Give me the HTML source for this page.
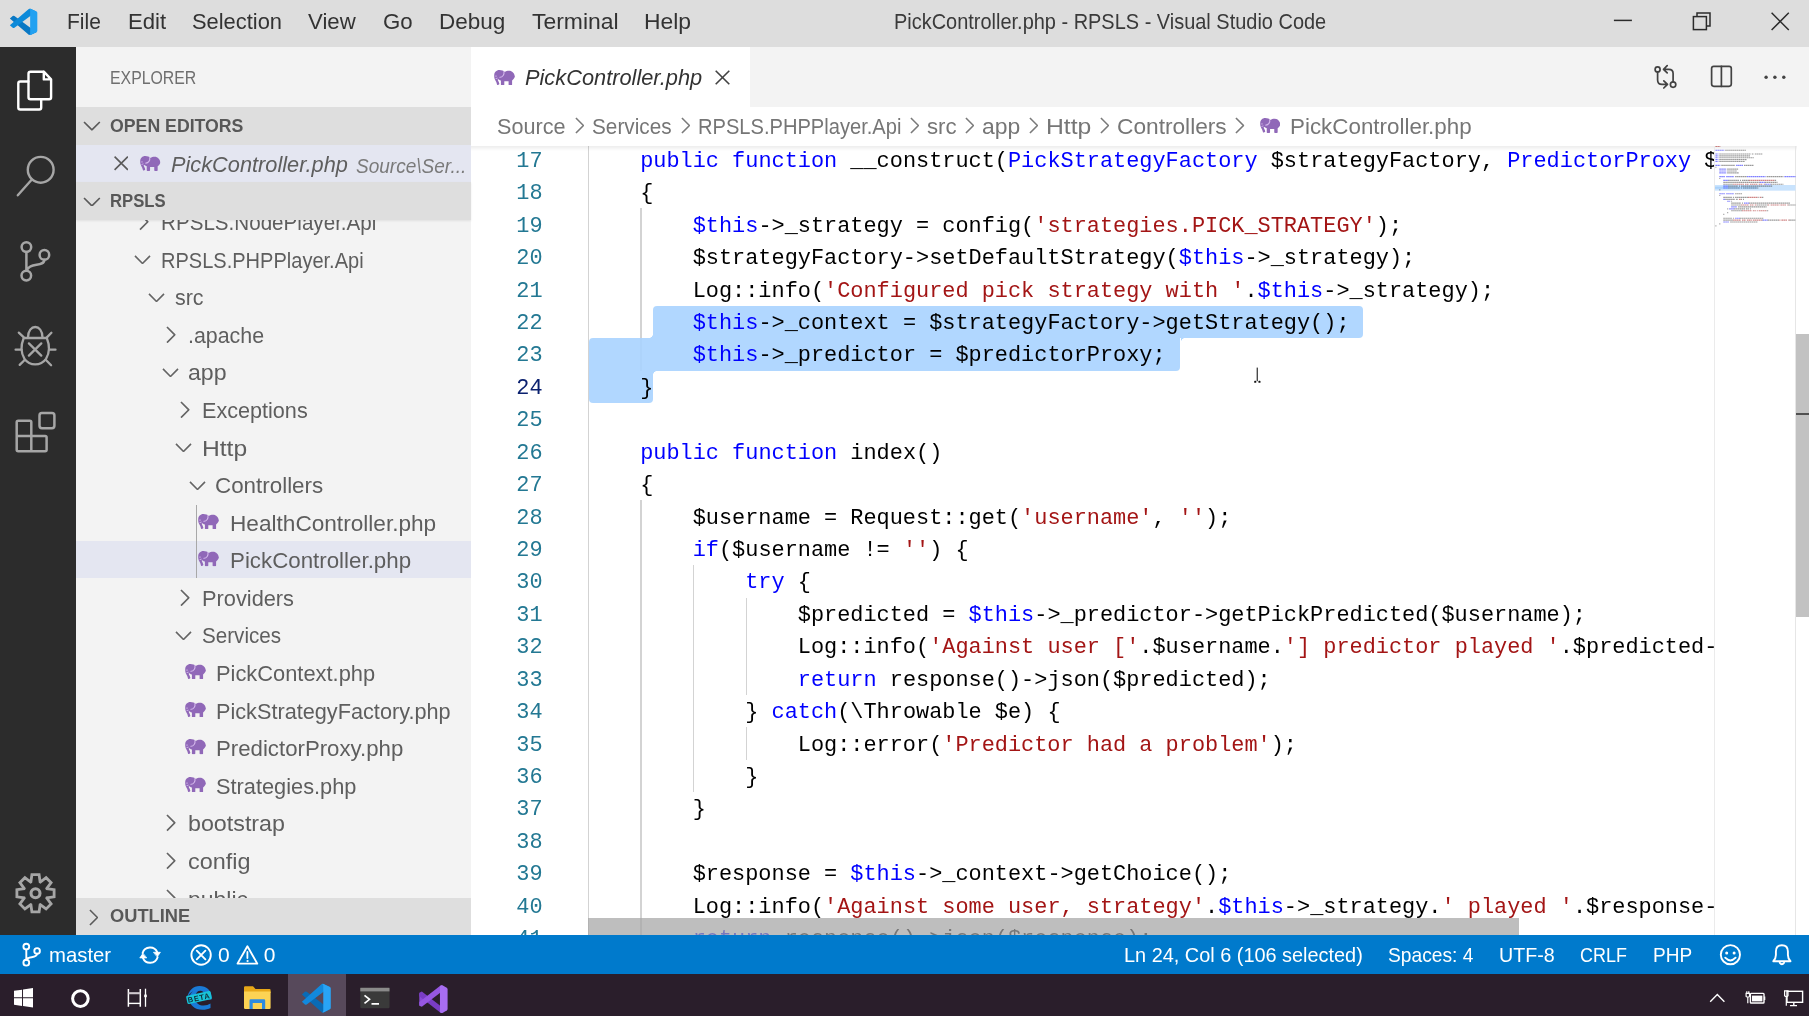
<!DOCTYPE html>
<html><head><meta charset="utf-8"><title>PickController.php - RPSLS - Visual Studio Code</title>
<style>
*{box-sizing:border-box;margin:0;padding:0}
html,body{width:1809px;height:1016px;overflow:hidden;background:#fff}
#root{position:absolute;left:0;top:0;width:1809px;height:1016px;overflow:hidden;will-change:transform}
body{position:relative;font-family:"Liberation Sans",sans-serif;}
.a{position:absolute}
.t{position:absolute;white-space:pre;line-height:1}
.m{font-family:"Liberation Mono",monospace}
.k{color:#0000ff}.s{color:#a31515}
</style></head>
<body>
<div id="root">
<svg width="0" height="0" style="position:absolute"><defs>
<symbol id="el" viewBox="0 0 21 15.4">
<path fill="#9068b8" d="M5.4 0.1C2.3 0.1 0.3 2.4 0.2 5.2 0.1 7.3 0.5 8.8 1.3 10.2 2 11.4 2.6 12.6 3 14.4 3.1 14.9 3.6 15.1 4 14.9L4.9 14.4C5.3 14.2 5.4 13.8 5.3 13.4 4.9 12 4.3 10.9 3.6 9.8L4.6 9.2C5.3 9.9 6.1 10.4 6.9 10.6L6.9 14.6C6.9 15 7.2 15.3 7.6 15.3L9.6 15.3C10 15.3 10.3 15 10.3 14.6L10.3 11.3 14.6 11.3 14.6 14.6C14.6 15 14.9 15.3 15.3 15.3L17.4 15.3C17.8 15.3 18.1 15 18.1 14.6L18.1 10.4C19.6 9.4 20.6 8 20.9 6.6 20.5 3.2 18.2 0.7 15 0.7 13.3 0.7 11.8 1.1 10.7 2 9.5 0.8 7.6 0.1 5.4 0.1Z"/>
<path fill="none" stroke="#d4b8ec" stroke-width="1.1" stroke-linecap="round" d="M9.9 1.6C10.6 4.4 8.6 7.4 5.9 7.3"/>
<path fill="none" stroke="#d4b8ec" stroke-width="0.9" stroke-linecap="round" d="M1.9 8.6L3.2 8.2M1.6 6.1L2.4 6.1"/>
</symbol>
<symbol id="cd" viewBox="0 0 18 10"><path fill="none" stroke-width="1.7" d="M1 1L9 9L17 1"/></symbol>
<symbol id="cr" viewBox="0 0 10 18"><path fill="none" stroke-width="1.7" d="M1 1L9 9L1 17"/></symbol>
</defs></svg>
<div class="a" style="left:0px;top:0px;width:1809px;height:47px;background:#dddddd;"></div>
<svg class="a" style="left:9.1px;top:7.8px" width="28.6" height="27.8" viewBox="0 0 100 100" preserveAspectRatio="none">
<path fill="#0a78c4" d="M3 62L13 71Q16 73 19 71L96 13 75 3Q71 1.5 68 4.5L3 62Z" transform="translate(0,100) scale(1,-1)"/>
<path fill="#0d8ad9" d="M3 62L13 71Q16 73 19 71L96 13 75 3Q71 1.5 68 4.5L3 62Z"/>
<path fill="#22a1f1" d="M75 3L96 13Q99 14.500 99 18L99 82Q99 85.500 96 87L75 97Q72 98 70 96Q74 96 74 92L74 8Q74 4 70 4Q72 2 75 3Z"/>
</svg>
<div class="t" style="left:67.44px;top:9.37px;font-size:21.3px;line-height:27.69px;color:#333333;transform:scaleX(0.9851);transform-origin:0 50%;">File</div>
<div class="t" style="left:128.07px;top:9.37px;font-size:21.3px;line-height:27.69px;color:#333333;transform:scaleX(1.0396);transform-origin:0 50%;">Edit</div>
<div class="t" style="left:192.39px;top:9.37px;font-size:21.3px;line-height:27.69px;color:#333333;transform:scaleX(1.0274);transform-origin:0 50%;">Selection</div>
<div class="t" style="left:308.47px;top:9.37px;font-size:21.3px;line-height:27.69px;color:#333333;transform:scaleX(1.0411);transform-origin:0 50%;">View</div>
<div class="t" style="left:382.67px;top:9.37px;font-size:21.3px;line-height:27.69px;color:#333333;transform:scaleX(1.0438);transform-origin:0 50%;">Go</div>
<div class="t" style="left:438.95px;top:9.37px;font-size:21.3px;line-height:27.69px;color:#333333;transform:scaleX(1.0563);transform-origin:0 50%;">Debug</div>
<div class="t" style="left:531.52px;top:9.37px;font-size:21.3px;line-height:27.69px;color:#333333;transform:scaleX(1.0766);transform-origin:0 50%;">Terminal</div>
<div class="t" style="left:643.93px;top:9.37px;font-size:21.3px;line-height:27.69px;color:#333333;transform:scaleX(1.0738);transform-origin:0 50%;">Help</div>
<div class="t" style="left:894.4px;top:9.37px;font-size:21.3px;line-height:27.69px;color:#3a3a3a;transform:scaleX(0.9369);transform-origin:0 50%;">PickController.php - RPSLS - Visual Studio Code</div>
<svg class="a" style="left:1605px;top:5px" width="200" height="36" viewBox="1605 5 200 36" fill="none" stroke="#2b2b2b" stroke-width="1.5"><path d="M1613.9 20.4H1631.9"/><rect x="1693.4" y="16.6" width="13" height="13"/><path d="M1697 16.4V13H1710V26H1706.6"/><path d="M1771.6 12.8L1788.8 30M1788.8 12.8L1771.6 30"/></svg>
<div class="a" style="left:0px;top:47px;width:75.5px;height:889px;background:#2c2c2c;"></div>
<svg class="a" style="left:0;top:46px" width="76" height="890" viewBox="0 46 76 890" fill="none" stroke-linejoin="round" stroke-linecap="round"><g stroke="#ffffff" stroke-width="2.4"><path d="M28.3 81.500H20.300Q18.300 81.500 18.300 83.500V107.500Q18.300 109.500 20.300 109.500H39.200Q41.200 109.500 41.200 107.500V99.500"/><path d="M43.800 71.700H30.500Q28.500 71.700 28.500 73.700V97.200Q28.500 99.200 30.500 99.200H49.100Q51.100 99.200 51.100 97.200V79.400L43.800 71.700V79.400H51.100"/></g><g stroke="#a6a6a6" stroke-width="2.4"><circle cx="40.7" cy="169.8" r="12.9"/><path d="M31.6 179.800L17.800 195.300"/></g><g stroke="#a6a6a6" stroke-width="2.5"><circle cx="26.4" cy="247.1" r="4.8"/><circle cx="26.3" cy="275.6" r="4.8"/><circle cx="44.4" cy="254.9" r="4.8"/><path d="M26.400 252V270.800M44.400 259.800C44.400 267.500 29 262 26.800 270.500"/></g><g stroke="#a6a6a6" stroke-width="2.3"><path d="M23.700 338H46.800C49.800 345.500 49.600 353 46 358.800C43.200 362.800 39.200 364.400 35.200 364.400C31.200 364.400 27.300 362.800 24.500 358.800C20.900 353 20.700 345.500 23.700 338Z"/><path d="M28 337.500C28 323.500 42.500 323.500 42.500 337.500"/><path d="M28.900 343.400L41.300 355.600M41.300 343.400L28.900 355.600"/><path d="M15.600 349.700H21.600M49.500 349.700H55.500M18.800 332.600L23.600 337.200M51.400 332.800L46.900 337.400M19.700 364.900L24.900 359.800M51.100 365.200L45.700 359.800"/></g><g stroke="#a6a6a6" stroke-width="2.5"><path d="M18.200 420.800H29.800Q31.300 420.800 31.300 422.300V436.100H45.100Q46.600 436.100 46.600 437.600V449.800Q46.600 451.300 45.100 451.300H18.200Q16.700 451.300 16.700 449.800V422.300Q16.700 420.800 18.200 420.800ZM16.700 436.100H31.300V451.300"/><rect x="39.5" y="413.100" width="14.900" height="15.100" rx="2.400"/></g></svg>
<svg class="a" style="left:0;top:860px" width="75" height="70" viewBox="0 860 75 70" fill="none" stroke="#a6a6a6" stroke-width="2.8" stroke-linejoin="miter"><path d="M30.9 881.9L31.9 874.7L39.1 874.7L40.1 881.9L40.3 882.0L46.1 877.7L51.1 882.7L46.8 888.5L46.9 888.7L54.1 889.7L54.1 896.9L46.9 897.9L46.8 898.1L51.1 903.9L46.1 908.9L40.3 904.6L40.1 904.7L39.1 911.9L31.9 911.9L30.9 904.7L30.7 904.6L24.9 908.9L19.9 903.9L24.2 898.1L24.1 897.9L16.9 896.9L16.9 889.7L24.1 888.7L24.2 888.5L19.9 882.7L24.9 877.7L30.7 882.0Z"/><circle cx="35.5" cy="893.3" r="4.5" stroke-width="3.1"/></svg>
<div class="a" style="left:75.5px;top:47px;width:395.1px;height:889px;background:#f3f3f3;"></div>
<div class="t" style="left:110.25px;top:65.96px;font-size:18.5px;line-height:24.05px;color:#6f6f6f;transform:scaleX(0.8565);transform-origin:0 50%;">EXPLORER</div>
<div class="a" style="left:76px;top:540.7px;width:394.6px;height:37.7px;background:#e4e6f1;"></div>
<div class="a" style="left:195.8px;top:504.5px;width:1.2px;height:73.9px;background:#a8a8a8;"></div>
<div class="t" style="left:161.36px;top:209.1px;font-size:22px;line-height:28.6px;color:#5e5e5e;transform:scaleX(0.9368);transform-origin:0 50%;">RPSLS.NodePlayer.Api</div>
<svg class="a" style="left:139.31px;top:212.83px;stroke:#646464;" width="9.78" height="17.68"><use href="#cr"/></svg>
<div class="t" style="left:161.4px;top:246.68px;font-size:22px;line-height:28.6px;color:#5e5e5e;transform:scaleX(0.9104);transform-origin:0 50%;">RPSLS.PHPPlayer.Api</div>
<svg class="a" style="left:134.4px;top:255.05px;stroke:#646464;" width="17.0" height="9.4"><use href="#cd"/></svg>
<div class="t" style="left:174.91px;top:284.26px;font-size:22px;line-height:28.6px;color:#5e5e5e;transform:scaleX(0.9742);transform-origin:0 50%;">src</div>
<svg class="a" style="left:147.95px;top:292.63px;stroke:#646464;" width="17.0" height="9.4"><use href="#cd"/></svg>
<div class="t" style="left:188.42px;top:321.84px;font-size:22px;line-height:28.6px;color:#5e5e5e;transform:scaleX(0.9715);transform-origin:0 50%;">.apache</div>
<svg class="a" style="left:166.41px;top:325.57px;stroke:#646464;" width="9.78" height="17.68"><use href="#cr"/></svg>
<div class="t" style="left:188.31px;top:359.42px;font-size:22px;line-height:28.6px;color:#5e5e5e;transform:scaleX(1.0505);transform-origin:0 50%;">app</div>
<svg class="a" style="left:161.5px;top:367.79px;stroke:#646464;" width="17.0" height="9.4"><use href="#cd"/></svg>
<div class="t" style="left:201.9px;top:397.0px;font-size:22px;line-height:28.6px;color:#5e5e5e;transform:scaleX(0.9820);transform-origin:0 50%;">Exceptions</div>
<svg class="a" style="left:179.96px;top:400.73px;stroke:#646464;" width="9.78" height="17.68"><use href="#cr"/></svg>
<div class="t" style="left:201.72px;top:434.58px;font-size:22px;line-height:28.6px;color:#5e5e5e;transform:scaleX(1.1188);transform-origin:0 50%;">Http</div>
<svg class="a" style="left:175.05px;top:442.95px;stroke:#646464;" width="17.0" height="9.4"><use href="#cd"/></svg>
<div class="t" style="left:215.46px;top:472.16px;font-size:22px;line-height:28.6px;color:#5e5e5e;transform:scaleX(1.0170);transform-origin:0 50%;">Controllers</div>
<svg class="a" style="left:188.6px;top:480.53px;stroke:#646464;" width="17.0" height="9.4"><use href="#cd"/></svg>
<svg class="a" style="left:198.4px;top:513.71px;" width="21" height="15.4"><use href="#el"/></svg>
<div class="t" style="left:229.54px;top:509.74px;font-size:22px;line-height:28.6px;color:#5e5e5e;transform:scaleX(1.0281);transform-origin:0 50%;">HealthController.php</div>
<svg class="a" style="left:198.4px;top:551.29px;" width="21" height="15.4"><use href="#el"/></svg>
<div class="t" style="left:229.56px;top:547.32px;font-size:22px;line-height:28.6px;color:#5e5e5e;transform:scaleX(1.0142);transform-origin:0 50%;">PickController.php</div>
<div class="t" style="left:201.89px;top:584.9px;font-size:22px;line-height:28.6px;color:#5e5e5e;transform:scaleX(0.9902);transform-origin:0 50%;">Providers</div>
<svg class="a" style="left:179.96px;top:588.63px;stroke:#646464;" width="9.78" height="17.68"><use href="#cr"/></svg>
<div class="t" style="left:201.96px;top:622.48px;font-size:22px;line-height:28.6px;color:#5e5e5e;transform:scaleX(0.9374);transform-origin:0 50%;">Services</div>
<svg class="a" style="left:175.05px;top:630.85px;stroke:#646464;" width="17.0" height="9.4"><use href="#cd"/></svg>
<svg class="a" style="left:184.9px;top:664.03px;" width="21" height="15.4"><use href="#el"/></svg>
<div class="t" style="left:216.09px;top:660.06px;font-size:22px;line-height:28.6px;color:#5e5e5e;transform:scaleX(0.9933);transform-origin:0 50%;">PickContext.php</div>
<svg class="a" style="left:184.9px;top:701.61px;" width="21" height="15.4"><use href="#el"/></svg>
<div class="t" style="left:216.1px;top:697.64px;font-size:22px;line-height:28.6px;color:#5e5e5e;transform:scaleX(0.9856);transform-origin:0 50%;">PickStrategyFactory.php</div>
<svg class="a" style="left:184.9px;top:739.19px;" width="21" height="15.4"><use href="#el"/></svg>
<div class="t" style="left:216.07px;top:735.22px;font-size:22px;line-height:28.6px;color:#5e5e5e;transform:scaleX(1.0098);transform-origin:0 50%;">PredictorProxy.php</div>
<svg class="a" style="left:184.9px;top:776.77px;" width="21" height="15.4"><use href="#el"/></svg>
<div class="t" style="left:216.09px;top:772.8px;font-size:22px;line-height:28.6px;color:#5e5e5e;transform:scaleX(0.9897);transform-origin:0 50%;">Strategies.php</div>
<div class="t" style="left:188.3px;top:810.38px;font-size:22px;line-height:28.6px;color:#5e5e5e;transform:scaleX(1.0573);transform-origin:0 50%;">bootstrap</div>
<svg class="a" style="left:166.41px;top:814.11px;stroke:#646464;" width="9.78" height="17.68"><use href="#cr"/></svg>
<div class="t" style="left:188.29px;top:847.96px;font-size:22px;line-height:28.6px;color:#5e5e5e;transform:scaleX(1.0646);transform-origin:0 50%;">config</div>
<svg class="a" style="left:166.41px;top:851.69px;stroke:#646464;" width="9.78" height="17.68"><use href="#cr"/></svg>
<div class="t" style="left:188.32px;top:885.54px;font-size:22px;line-height:28.6px;color:#5e5e5e;transform:scaleX(1.0448);transform-origin:0 50%;">public</div>
<svg class="a" style="left:166.41px;top:889.27px;stroke:#646464;" width="9.78" height="17.68"><use href="#cr"/></svg>
<div class="a" style="left:76px;top:107px;width:394.6px;height:37.8px;background:#dedede;z-index:3"></div>
<div class="a" style="left:76px;top:144.8px;width:394.6px;height:37.0px;background:#e4e6f1;z-index:3"></div>
<div class="a" style="left:76px;top:181.8px;width:394.6px;height:38.1px;background:#dedede;z-index:3;box-shadow:0 1px 2px rgba(0,0,0,0.08)"></div>
<div class="a" style="left:76px;top:898.1px;width:394.6px;height:37.9px;background:#dedede;z-index:3"></div>
<div class="t" style="left:110.14px;top:114.17px;font-size:19px;line-height:24.7px;color:#585858;transform:scaleX(0.9315);transform-origin:0 50%;z-index:4;font-weight:bold;">OPEN EDITORS</div>
<svg class="a" style="left:83.17px;top:121.47px;stroke:#5a5a5a;z-index:4;" width="17.85" height="9.87"><use href="#cd"/></svg>
<div class="t" style="left:110.2px;top:189.27px;font-size:19px;line-height:24.7px;color:#585858;transform:scaleX(0.8775);transform-origin:0 50%;z-index:4;font-weight:bold;">RPSLS</div>
<svg class="a" style="left:83.17px;top:196.56px;stroke:#5a5a5a;z-index:4;" width="17.85" height="9.87"><use href="#cd"/></svg>
<div class="t" style="left:110.1px;top:904.47px;font-size:19px;line-height:24.7px;color:#585858;transform:scaleX(0.9616);transform-origin:0 50%;z-index:4;font-weight:bold;">OUTLINE</div>
<svg class="a" style="left:88.5px;top:908.5px;stroke:#5a5a5a;z-index:4;" width="9.4" height="17.0"><use href="#cr"/></svg>
<svg class="a" style="left:113.5px;top:156.3px;z-index:4" width="14.5" height="14.5" viewBox="0 0 14.5 14.5"><path d="M0.6 0.6L13.9 13.9M13.9 0.6L0.6 13.9" stroke="#5a5a5a" stroke-width="1.6" fill="none"/></svg>
<svg class="a" style="left:140.2px;top:156.08px;z-index:4;" width="20.5" height="15.03"><use href="#el"/></svg>
<div class="t" style="left:170.99px;top:150.88px;font-size:22px;line-height:28.6px;color:#5e5e5e;transform:scaleX(0.9887);transform-origin:0 50%;z-index:4;font-style:italic;">PickController.php</div>
<div class="t" style="left:356.36px;top:152.87px;font-size:20px;line-height:26.0px;color:#7a7a7a;transform:scaleX(0.9508);transform-origin:0 50%;z-index:4;font-style:italic;">Source\Ser...</div>
<div class="a" style="left:470.6px;top:47px;width:1338.4px;height:59.7px;background:#f3f3f3;"></div>
<div class="a" style="left:470.6px;top:47px;width:279.7px;height:59.7px;background:#ffffff;"></div>
<svg class="a" style="left:493.6px;top:69.6px;" width="21" height="15.4"><use href="#el"/></svg>
<div class="t" style="left:524.89px;top:64.28px;font-size:22px;line-height:28.6px;color:#333333;transform:scaleX(0.9904);transform-origin:0 50%;font-style:italic;">PickController.php</div>
<svg class="a" style="left:715px;top:69.9px" width="15" height="15" viewBox="0 0 15 15"><path d="M0.7 0.7L14.3 14.3M14.300 0.700L0.700 14.300" stroke="#424242" stroke-width="1.6" fill="none"/></svg>
<svg class="a" style="left:1650px;top:60px" width="150" height="34" viewBox="1650 60 150 34" fill="none" stroke="#424242" stroke-width="1.7" stroke-linejoin="round" stroke-linecap="round"><circle cx="1657.6" cy="69.4" r="2.5"/><circle cx="1673.1" cy="84.6" r="2.7"/><path d="M1657.600 72V80Q1657.600 84.400 1662 84.400H1667M1663.800 80.800L1667.500 84.400L1663.800 88"/><path d="M1673.100 81.800V73.500Q1673.100 69.300 1668.800 69.300H1664M1667.200 65.700L1663.500 69.300L1667.200 72.900"/><rect x="1711.6" y="66.300" width="19.7" height="20" rx="2.2"/><path d="M1721.400 66.300V86.300"/><g fill="#424242" stroke="none"><circle cx="1766.1" cy="77.2" r="1.7"/><circle cx="1774.9" cy="77.2" r="1.700"/><circle cx="1783.8" cy="77.2" r="1.700"/></g></svg>
<div class="a" style="left:470px;top:106.7px;width:1339px;height:39.3px;background:#ffffff;"></div>
<div class="t" style="left:497.3px;top:113.88px;font-size:21.5px;line-height:27.95px;color:#767676;transform:scaleX(1.0054);transform-origin:0 50%;">Source</div>
<div class="t" style="left:591.85px;top:113.88px;font-size:21.5px;line-height:27.95px;color:#767676;transform:scaleX(0.9653);transform-origin:0 50%;">Services</div>
<div class="t" style="left:697.69px;top:113.88px;font-size:21.5px;line-height:27.95px;color:#767676;transform:scaleX(0.9352);transform-origin:0 50%;">RPSLS.PHPPlayer.Api</div>
<div class="t" style="left:927.17px;top:113.88px;font-size:21.5px;line-height:27.95px;color:#767676;transform:scaleX(1.0348);transform-origin:0 50%;">src</div>
<div class="t" style="left:982.12px;top:113.88px;font-size:21.5px;line-height:27.95px;color:#767676;transform:scaleX(1.0662);transform-origin:0 50%;">app</div>
<div class="t" style="left:1046.02px;top:113.88px;font-size:21.5px;line-height:27.95px;color:#767676;transform:scaleX(1.1500);transform-origin:0 50%;">Http</div>
<div class="t" style="left:1117.14px;top:113.88px;font-size:21.5px;line-height:27.95px;color:#767676;transform:scaleX(1.0555);transform-origin:0 50%;">Controllers</div>
<svg class="a" style="left:575.0px;top:117.3px;stroke:#7a7a7a;" width="9.4" height="17.0"><use href="#cr"/></svg>
<svg class="a" style="left:680.6px;top:117.3px;stroke:#7a7a7a;" width="9.4" height="17.0"><use href="#cr"/></svg>
<svg class="a" style="left:910.0px;top:117.3px;stroke:#7a7a7a;" width="9.4" height="17.0"><use href="#cr"/></svg>
<svg class="a" style="left:964.8px;top:117.3px;stroke:#7a7a7a;" width="9.4" height="17.0"><use href="#cr"/></svg>
<svg class="a" style="left:1028.8px;top:117.3px;stroke:#7a7a7a;" width="9.4" height="17.0"><use href="#cr"/></svg>
<svg class="a" style="left:1099.8px;top:117.3px;stroke:#7a7a7a;" width="9.4" height="17.0"><use href="#cr"/></svg>
<svg class="a" style="left:1235.3px;top:117.3px;stroke:#7a7a7a;" width="9.4" height="17.0"><use href="#cr"/></svg>
<svg class="a" style="left:1259.5px;top:117.78px;" width="20.5" height="15.03"><use href="#el"/></svg>
<div class="t" style="left:1289.96px;top:113.88px;font-size:21.5px;line-height:27.95px;color:#767676;transform:scaleX(1.0413);transform-origin:0 50%;">PickController.php</div>
<div class="a" style="left:470px;top:146px;width:1245px;height:789px;overflow:hidden">
<div class="a" style="left:117.9px;top:-2.5px;width:1.1px;height:810.75px;background:#d3d3d3;"></div>
<div class="a" style="left:170.48px;top:62.36px;width:1.1px;height:162.15px;background:#d3d3d3;"></div>
<div class="a" style="left:170.48px;top:354.23px;width:1.1px;height:454.02px;background:#d3d3d3;"></div>
<div class="a" style="left:223.06px;top:419.09px;width:1.1px;height:227.01px;background:#d3d3d3;"></div>
<div class="a" style="left:275.64px;top:451.52px;width:1.1px;height:97.29px;background:#d3d3d3;"></div>
<div class="a" style="left:275.64px;top:581.24px;width:1.1px;height:32.43px;background:#d3d3d3;"></div>
<div class="a" style="left:183.33px;top:159.65px;width:710.17px;height:32.43px;background:rgba(168,211,255,0.9);border-radius:4px 4px 4px 0"></div>
<div class="a" style="left:118.8px;top:192.08px;width:591.7px;height:32.43px;background:rgba(168,211,255,0.9);border-radius:4px 0 4px 0"></div>
<div class="a" style="left:118.8px;top:224.51px;width:64.52px;height:32.43px;background:rgba(168,211,255,0.9);border-radius:0 0 4px 4px"></div>
<div class="a" style="left:179.33px;top:188.08px;width:4px;height:4px;background:radial-gradient(circle at 0 0,rgba(168,211,255,0) 3.6px,rgba(168,211,255,0.9) 4.2px)"></div>
<div class="a" style="left:183.33px;top:224.51px;width:4px;height:4px;background:radial-gradient(circle at 100% 100%,rgba(168,211,255,0) 3.6px,rgba(168,211,255,0.9) 4.2px)"></div>
<div class="a" style="left:710.5px;top:192.08px;width:4px;height:4px;background:radial-gradient(circle at 100% 100%,rgba(168,211,255,0) 3.6px,rgba(168,211,255,0.9) 4.2px)"></div>
<div class="t m" style="left:117.6px;top:-0.2px;font-size:21.9px;line-height:32.43px;height:32.43px;color:#000">    <span class="k">public</span> <span class="k">function</span> __construct(<span class="k">PickStrategyFactory</span> $strategyFactory, <span class="k">PredictorProxy</span> $predictorProxy)</div>
<div class="t m" style="left:32px;width:40.6px;text-align:right;top:-0.2px;font-size:21.9px;line-height:32.43px;color:#237893">17</div>
<div class="t m" style="left:117.6px;top:32.23px;font-size:21.9px;line-height:32.43px;height:32.43px;color:#000">    {</div>
<div class="t m" style="left:32px;width:40.6px;text-align:right;top:32.23px;font-size:21.9px;line-height:32.43px;color:#237893">18</div>
<div class="t m" style="left:117.6px;top:64.66px;font-size:21.9px;line-height:32.43px;height:32.43px;color:#000">        <span class="k">$this</span>-&gt;_strategy = config(<span class="s">&#x27;strategies.PICK_STRATEGY&#x27;</span>);</div>
<div class="t m" style="left:32px;width:40.6px;text-align:right;top:64.66px;font-size:21.9px;line-height:32.43px;color:#237893">19</div>
<div class="t m" style="left:117.6px;top:97.09px;font-size:21.9px;line-height:32.43px;height:32.43px;color:#000">        $strategyFactory-&gt;setDefaultStrategy(<span class="k">$this</span>-&gt;_strategy);</div>
<div class="t m" style="left:32px;width:40.6px;text-align:right;top:97.09px;font-size:21.9px;line-height:32.43px;color:#237893">20</div>
<div class="t m" style="left:117.6px;top:129.52px;font-size:21.9px;line-height:32.43px;height:32.43px;color:#000">        Log::info(<span class="s">&#x27;Configured pick strategy with &#x27;</span>.<span class="k">$this</span>-&gt;_strategy);</div>
<div class="t m" style="left:32px;width:40.6px;text-align:right;top:129.52px;font-size:21.9px;line-height:32.43px;color:#237893">21</div>
<div class="t m" style="left:117.6px;top:161.95px;font-size:21.9px;line-height:32.43px;height:32.43px;color:#000">        <span class="k">$this</span>-&gt;_context = $strategyFactory-&gt;getStrategy();</div>
<div class="t m" style="left:32px;width:40.6px;text-align:right;top:161.95px;font-size:21.9px;line-height:32.43px;color:#237893">22</div>
<div class="t m" style="left:117.6px;top:194.38px;font-size:21.9px;line-height:32.43px;height:32.43px;color:#000">        <span class="k">$this</span>-&gt;_predictor = $predictorProxy;</div>
<div class="t m" style="left:32px;width:40.6px;text-align:right;top:194.38px;font-size:21.9px;line-height:32.43px;color:#237893">23</div>
<div class="t m" style="left:117.6px;top:226.81px;font-size:21.9px;line-height:32.43px;height:32.43px;color:#000">    }</div>
<div class="t m" style="left:32px;width:40.6px;text-align:right;top:226.81px;font-size:21.9px;line-height:32.43px;color:#0b216f">24</div>
<div class="t m" style="left:117.6px;top:259.24px;font-size:21.9px;line-height:32.43px;height:32.43px;color:#000"></div>
<div class="t m" style="left:32px;width:40.6px;text-align:right;top:259.24px;font-size:21.9px;line-height:32.43px;color:#237893">25</div>
<div class="t m" style="left:117.6px;top:291.67px;font-size:21.9px;line-height:32.43px;height:32.43px;color:#000">    <span class="k">public</span> <span class="k">function</span> index()</div>
<div class="t m" style="left:32px;width:40.6px;text-align:right;top:291.67px;font-size:21.9px;line-height:32.43px;color:#237893">26</div>
<div class="t m" style="left:117.6px;top:324.1px;font-size:21.9px;line-height:32.43px;height:32.43px;color:#000">    {</div>
<div class="t m" style="left:32px;width:40.6px;text-align:right;top:324.1px;font-size:21.9px;line-height:32.43px;color:#237893">27</div>
<div class="t m" style="left:117.6px;top:356.53px;font-size:21.9px;line-height:32.43px;height:32.43px;color:#000">        $username = Request::get(<span class="s">&#x27;username&#x27;</span>, <span class="s">&#x27;&#x27;</span>);</div>
<div class="t m" style="left:32px;width:40.6px;text-align:right;top:356.53px;font-size:21.9px;line-height:32.43px;color:#237893">28</div>
<div class="t m" style="left:117.6px;top:388.96px;font-size:21.9px;line-height:32.43px;height:32.43px;color:#000">        <span class="k">if</span>($username != <span class="s">&#x27;&#x27;</span>) {</div>
<div class="t m" style="left:32px;width:40.6px;text-align:right;top:388.96px;font-size:21.9px;line-height:32.43px;color:#237893">29</div>
<div class="t m" style="left:117.6px;top:421.39px;font-size:21.9px;line-height:32.43px;height:32.43px;color:#000">            <span class="k">try</span> {</div>
<div class="t m" style="left:32px;width:40.6px;text-align:right;top:421.39px;font-size:21.9px;line-height:32.43px;color:#237893">30</div>
<div class="t m" style="left:117.6px;top:453.82px;font-size:21.9px;line-height:32.43px;height:32.43px;color:#000">                $predicted = <span class="k">$this</span>-&gt;_predictor-&gt;getPickPredicted($username);</div>
<div class="t m" style="left:32px;width:40.6px;text-align:right;top:453.82px;font-size:21.9px;line-height:32.43px;color:#237893">31</div>
<div class="t m" style="left:117.6px;top:486.25px;font-size:21.9px;line-height:32.43px;height:32.43px;color:#000">                Log::info(<span class="s">&#x27;Against user [&#x27;</span>.$username.<span class="s">&#x27;] predictor played &#x27;</span>.$predicted-&gt;getText());</div>
<div class="t m" style="left:32px;width:40.6px;text-align:right;top:486.25px;font-size:21.9px;line-height:32.43px;color:#237893">32</div>
<div class="t m" style="left:117.6px;top:518.68px;font-size:21.9px;line-height:32.43px;height:32.43px;color:#000">                <span class="k">return</span> response()-&gt;json($predicted);</div>
<div class="t m" style="left:32px;width:40.6px;text-align:right;top:518.68px;font-size:21.9px;line-height:32.43px;color:#237893">33</div>
<div class="t m" style="left:117.6px;top:551.11px;font-size:21.9px;line-height:32.43px;height:32.43px;color:#000">            } <span class="k">catch</span>(\Throwable $e) {</div>
<div class="t m" style="left:32px;width:40.6px;text-align:right;top:551.11px;font-size:21.9px;line-height:32.43px;color:#237893">34</div>
<div class="t m" style="left:117.6px;top:583.54px;font-size:21.9px;line-height:32.43px;height:32.43px;color:#000">                Log::error(<span class="s">&#x27;Predictor had a problem&#x27;</span>);</div>
<div class="t m" style="left:32px;width:40.6px;text-align:right;top:583.54px;font-size:21.9px;line-height:32.43px;color:#237893">35</div>
<div class="t m" style="left:117.6px;top:615.97px;font-size:21.9px;line-height:32.43px;height:32.43px;color:#000">            }</div>
<div class="t m" style="left:32px;width:40.6px;text-align:right;top:615.97px;font-size:21.9px;line-height:32.43px;color:#237893">36</div>
<div class="t m" style="left:117.6px;top:648.4px;font-size:21.9px;line-height:32.43px;height:32.43px;color:#000">        }</div>
<div class="t m" style="left:32px;width:40.6px;text-align:right;top:648.4px;font-size:21.9px;line-height:32.43px;color:#237893">37</div>
<div class="t m" style="left:117.6px;top:680.83px;font-size:21.9px;line-height:32.43px;height:32.43px;color:#000"></div>
<div class="t m" style="left:32px;width:40.6px;text-align:right;top:680.83px;font-size:21.9px;line-height:32.43px;color:#237893">38</div>
<div class="t m" style="left:117.6px;top:713.26px;font-size:21.9px;line-height:32.43px;height:32.43px;color:#000">        $response = <span class="k">$this</span>-&gt;_context-&gt;getChoice();</div>
<div class="t m" style="left:32px;width:40.6px;text-align:right;top:713.26px;font-size:21.9px;line-height:32.43px;color:#237893">39</div>
<div class="t m" style="left:117.6px;top:745.69px;font-size:21.9px;line-height:32.43px;height:32.43px;color:#000">        Log::info(<span class="s">&#x27;Against some user, strategy&#x27;</span>.<span class="k">$this</span>-&gt;_strategy.<span class="s">&#x27; played &#x27;</span>.$response-&gt;getText());</div>
<div class="t m" style="left:32px;width:40.6px;text-align:right;top:745.69px;font-size:21.9px;line-height:32.43px;color:#237893">40</div>
<div class="t m" style="left:117.6px;top:778.12px;font-size:21.9px;line-height:32.43px;height:32.43px;color:#000">        <span class="k">return</span> response()-&gt;json($response);</div>
<div class="t m" style="left:32px;width:40.6px;text-align:right;top:778.12px;font-size:21.9px;line-height:32.43px;color:#237893">41</div>
<div class="a" style="left:118px;top:771.8px;width:930.5px;height:17.6px;background:rgba(165,165,165,0.72);"></div>
</div>
<div class="a" style="left:470px;top:146px;width:1327px;height:5px;background:linear-gradient(rgba(0,0,0,0.07),rgba(0,0,0,0))"></div>
<div class="a" style="left:1713.6px;top:146px;width:1px;height:789px;background:#ebebeb"></div>
<div class="a" style="left:1795.2px;top:146px;width:1px;height:789px;background:#e6e6e6"></div>
<div class="a" style="left:1796.2px;top:333.6px;width:12.8px;height:283.9px;background:#c2c2c2;"></div>
<div class="a" style="left:1796.2px;top:413.3px;width:12.8px;height:2.0px;background:#505050;"></div>
<svg class="a" style="left:1250px;top:365px" width="16" height="20" viewBox="1250 365 16 20" fill="#111"><rect x="1256.600" y="367.600" width="1.400" height="13.600" fill="#4a4a4a"/><rect x="1254.200" y="380.800" width="2.100" height="2" rx="0.600"/><rect x="1258.400" y="380.800" width="2.100" height="2" rx="0.600"/></svg>
<svg class="a" style="left:1715px;top:146px" width="81" height="90" viewBox="1715 146 81 90" fill="none"><rect x="1715" y="184.99" width="80.5" height="5.67" fill="#c9e3fd"/><rect x="1715" y="186.69" width="42" height="2.1" fill="#a9d2fb"/><path d="M1725.2 150.2H1745.9M1719.3 154.0H1750.9M1751.8 154.0H1753.8M1754.8 154.0H1762.7M1719.3 155.8H1749.9M1719.3 157.7H1753.8M1719.3 159.6H1746.9M1719.3 161.5H1745.0M1721.3 165.3H1735.1M1744.0 165.3H1753.8M1715.4 167.2H1716.4M1727.2 169.1H1738.1M1727.2 171.0H1737.1M1727.2 172.9H1739.0M1719.3 223.9H1720.3M1715.4 225.8H1716.4M1735.1 176.6H1746.9M1766.6 176.6H1783.4M1719.3 178.5H1720.3M1728.2 180.4H1739.0M1740.0 180.4H1741.0M1742.0 180.4H1748.9M1774.5 180.4H1776.5M1723.3 182.3H1759.7M1764.7 182.3H1777.5M1723.3 184.2H1733.1M1764.7 184.2H1765.6M1770.6 184.2H1783.4M1728.2 186.1H1738.1M1739.0 186.1H1740.0M1741.0 186.1H1772.5M1728.2 188.0H1740.0M1741.0 188.0H1742.0M1743.0 188.0H1758.7M1719.3 189.9H1720.3M1735.1 193.7H1742.0M1719.3 195.5H1720.3M1723.3 197.4H1732.1M1733.1 197.4H1734.1M1735.1 197.4H1747.9M1757.8 197.4H1758.7M1761.7 197.4H1763.7M1725.2 199.3H1735.1M1736.1 199.3H1738.1M1741.0 199.3H1742.0M1743.0 199.3H1744.0M1731.2 201.2H1732.1M1731.2 203.1H1741.0M1742.0 203.1H1743.0M1748.9 203.1H1790.3M1731.2 205.0H1741.0M1756.8 205.0H1767.6M1788.3 205.0H1795.5M1738.1 206.9H1766.6M1727.2 208.8H1728.2M1734.1 208.8H1745.0M1745.9 208.8H1748.9M1749.9 208.8H1750.9M1731.2 210.7H1742.0M1766.6 210.7H1768.6M1727.2 212.6H1728.2M1723.3 214.4H1724.3M1723.3 218.2H1732.1M1733.1 218.2H1734.1M1740.0 218.2H1763.7M1723.3 220.1H1733.1M1761.7 220.1H1762.7M1767.6 220.1H1779.4M1789.3 220.1H1795.5M1730.2 222.0H1757.8" stroke="#000000" stroke-width="1.15" opacity="0.4" stroke-dasharray="1.6 0.37"/><path d="M1715.4 150.2H1724.3M1715.4 154.0H1718.4M1715.4 155.8H1718.4M1715.4 157.7H1718.4M1715.4 159.6H1718.4M1715.4 161.5H1718.4M1715.4 165.3H1720.3M1736.1 165.3H1743.0M1719.3 169.1H1726.2M1719.3 171.0H1726.2M1719.3 172.9H1726.2M1719.3 176.6H1725.2M1726.2 176.6H1734.1M1746.9 176.6H1765.6M1784.4 176.6H1795.5M1723.3 180.4H1728.2M1759.7 182.3H1764.7M1765.6 184.2H1770.6M1723.3 186.1H1728.2M1723.3 188.0H1728.2M1719.3 193.7H1725.2M1726.2 193.7H1734.1M1723.3 199.3H1725.2M1727.2 201.2H1730.2M1744.0 203.1H1748.9M1731.2 206.9H1737.1M1729.2 208.8H1734.1M1735.1 218.2H1740.0M1762.7 220.1H1767.6M1723.3 222.0H1729.2" stroke="#0000ff" stroke-width="1.15" opacity="0.5" stroke-dasharray="1.6 0.37"/><path d="M1715.4 146.4H1720.3M1748.9 180.4H1774.5M1733.1 184.2H1744.0M1745.0 184.2H1748.9M1749.9 184.2H1757.8M1758.7 184.2H1762.7M1763.7 184.2H1764.7M1747.9 197.4H1757.8M1759.7 197.4H1761.7M1739.0 199.3H1741.0M1741.0 205.0H1748.9M1749.9 205.0H1753.8M1754.8 205.0H1756.8M1767.6 205.0H1769.6M1770.6 205.0H1779.4M1780.4 205.0H1786.3M1787.3 205.0H1788.3M1742.0 210.7H1751.8M1752.8 210.7H1755.8M1756.8 210.7H1757.8M1758.7 210.7H1766.6M1733.1 220.1H1741.0M1742.0 220.1H1745.9M1746.9 220.1H1751.8M1752.8 220.1H1761.7M1779.4 220.1H1780.4M1781.4 220.1H1787.3M1788.3 220.1H1789.3" stroke="#a31515" stroke-width="1.15" opacity="0.52" stroke-dasharray="1.6 0.37"/></svg>
<div class="a" style="left:0;top:0;width:0;height:0;z-index:6">
<div class="a" style="left:0px;top:935.2px;width:1809px;height:39.3px;background:#007acc;"></div>
<div class="t" style="left:49.18px;top:941.27px;font-size:21px;line-height:27.3px;color:#ffffff;transform:scaleX(0.9681);transform-origin:0 50%;">master</div>
<div class="t" style="left:218.04px;top:941.27px;font-size:21px;line-height:27.3px;color:#ffffff;">0</div>
<div class="t" style="left:263.74px;top:941.27px;font-size:21px;line-height:27.3px;color:#ffffff;">0</div>
<div class="t" style="left:1124.31px;top:941.27px;font-size:21px;line-height:27.3px;color:#ffffff;transform:scaleX(0.9470);transform-origin:0 50%;">Ln 24, Col 6 (106 selected)</div>
<div class="t" style="left:1388.15px;top:941.27px;font-size:21px;line-height:27.3px;color:#ffffff;transform:scaleX(0.9143);transform-origin:0 50%;">Spaces: 4</div>
<div class="t" style="left:1499.42px;top:941.27px;font-size:21px;line-height:27.3px;color:#ffffff;transform:scaleX(0.9354);transform-origin:0 50%;">UTF-8</div>
<div class="t" style="left:1580.32px;top:941.27px;font-size:21px;line-height:27.3px;color:#ffffff;transform:scaleX(0.8543);transform-origin:0 50%;">CRLF</div>
<div class="t" style="left:1652.76px;top:941.27px;font-size:21px;line-height:27.3px;color:#ffffff;transform:scaleX(0.9049);transform-origin:0 50%;">PHP</div>
<svg class="a" style="left:0;top:936px" width="1809" height="37" viewBox="0 936 1809 37" fill="none" stroke="#fff" stroke-width="1.9" stroke-linecap="round" stroke-linejoin="round"><circle cx="26.3" cy="946.600" r="2.900"/><circle cx="26.300" cy="962.700" r="2.900"/><circle cx="37.1" cy="950.900" r="2.800"/><path d="M26.300 949.600V959.700M37.100 953.800C37.100 958.500 27.500 956 26.500 959.700"/><path d="M142.600 953A7.800 7.800 0 0 1 157.300 952.400M157.600 957.200A7.800 7.800 0 0 1 142.900 957.800"/><path fill="#fff" stroke-width="0.8" d="M153.800 952.300H160.400L157.400 956.600ZM146.400 957.900H139.800L142.800 953.600Z"/><circle cx="201.1" cy="955" r="9.7"/><path d="M196.800 950.700L205.400 959.300M205.400 950.700L196.800 959.300"/><path d="M247.4 946.300L257.300 963.600H237.500Z"/><path d="M247.400 952V958" stroke-width="1.8"/><circle cx="247.4" cy="961" r="0.6" fill="#fff" stroke-width="1"/><circle cx="1730.4" cy="954.700" r="9.600"/><path d="M1725.200 957.700Q1730.400 963.200 1735.600 957.700"/><g fill="#fff" stroke="none"><circle cx="1726.700" cy="953.100" r="1.500"/><circle cx="1734.100" cy="953.100" r="1.500"/></g><path d="M1773.300 961.200H1790.500Q1787.900 958.500 1787.900 955V951.500Q1787.900 945.200 1781.900 945.200Q1775.900 945.200 1775.900 951.500V955Q1775.900 958.500 1773.300 961.200Z"/><path d="M1779.700 962.800Q1781.900 965.800 1784.100 962.800"/></svg>
<div class="a" style="left:0px;top:973.5px;width:1809px;height:42.5px;background:#2a1e2b;"></div>
<div class="a" style="left:288px;top:973.5px;width:57.6px;height:42.5px;background:#57495b;"></div>
<svg class="a" style="left:13.8px;top:988.3px" width="19.6" height="19.6" viewBox="0 0 20 20"><path fill="#fff" d="M0 2.800L8.200 1.700V9.500H0ZM9.200 1.500L20 0V9.500H9.200ZM0 10.500H8.200V18.300L0 17.200ZM9.200 10.500H20V20L9.200 18.500Z"/></svg>
<svg class="a" style="left:70px;top:988px" width="21" height="21" viewBox="0 0 21 21"><circle cx="10.4" cy="10.6" r="7.800" fill="none" stroke="#fff" stroke-width="3"/></svg>
<svg class="a" style="left:126px;top:987px" width="24" height="22" viewBox="126 987 24 22" fill="none" stroke="#fff" stroke-width="1.5"><path d="M128.400 989.100V1006.800M140.300 989.100V1006.800"/><path d="M128.400 993.200H140.300" stroke="#cfc8cf" stroke-width="2.1"/><path d="M128.400 1003.400H140.300" stroke-width="1.400"/><path d="M145.500 988.700V1006.800" stroke-width="1.300"/><rect x="144.200" y="994.600" width="2.600" height="2.600" fill="#fff" stroke="none"/></svg>
<svg class="a" style="left:185px;top:985px" width="28" height="25" viewBox="185 985 28 25"><path fill="#1a7ad6" d="M187.500 998C188 990.500 193.500 986 199.500 986C206.500 986 211.500 990.500 211.500 997V999.500H195.500C196 1003.500 199.500 1005.500 203.500 1005.500C206.500 1005.500 208.500 1004.800 210.500 1003.500V1008C208.500 1009.200 205.500 1009.800 202.500 1009.800C194.500 1009.800 189.500 1005 189.500 998.500C189.500 995.500 190.800 993 193 991.300C190.500 992.500 188.500 995 187.500 998ZM195.600 995.500H204.500C204.500 992.500 202.800 990.800 200.200 990.800C197.700 990.800 196 992.700 195.600 995.500Z"/><rect x="186.500" y="993.300" width="25" height="8.400" rx="1.5" fill="#19c3d8" transform="rotate(-12 199 997.500)"/><text x="199" y="1000.500" font-family="Liberation Sans" font-weight="bold" font-size="7.500" fill="#10303a" text-anchor="middle" transform="rotate(-12 199 997.500)" letter-spacing="0.8">BETA</text></svg>
<svg class="a" style="left:243px;top:985px" width="29" height="25" viewBox="243 985 29 25"><path fill="#e8a818" d="M244 987.500Q244 986.300 245.200 986.300H253L255.500 989H269.500Q270.600 989 270.600 990.200V993H244Z"/><path fill="#fcd354" d="M244 991.500H270.600V1007.800Q270.600 1009 269.400 1009H245.200Q244 1009 244 1007.800Z"/><path fill="#2d8be0" d="M249.500 1009V1000.500Q249.500 999.300 250.700 999.300H264Q265.200 999.300 265.200 1000.500V1009H262V1003H252.700V1009Z"/></svg>
<svg class="a" style="left:301px;top:983.3px" width="30.1" height="30.3" viewBox="0 0 100 100" preserveAspectRatio="none">
<path fill="#0a6bb5" d="M3 62L13 71Q16 73 19 71L96 13 75 3Q71 1.5 68 4.5L3 62Z" transform="translate(0,100) scale(1,-1)"/>
<path fill="#1289dd" d="M3 62L13 71Q16 73 19 71L96 13 75 3Q71 1.5 68 4.5L3 62Z"/>
<path fill="#29a4f5" d="M75 3L96 13Q99 14.500 99 18L99 82Q99 85.500 96 87L75 97Q72 98 70 96Q74 96 74 92L74 8Q74 4 70 4Q72 2 75 3Z"/>
</svg>
<svg class="a" style="left:360px;top:987px" width="30" height="22" viewBox="360 987 30 22"><rect x="360.300" y="987.800" width="29.200" height="20.500" rx="1.2" fill="#3a3a3a"/><rect x="360.300" y="987.800" width="29.200" height="3.600" fill="#8a8a8a"/><path d="M364.500 995.300L369.500 999.300L364.500 1003.300M371.500 1003.800H379" fill="none" stroke="#fff" stroke-width="1.7"/></svg>
<svg class="a" style="left:419.3px;top:984.5px" width="28.9" height="28.3" viewBox="0 0 100 100"><path fill="#8a4bd6" d="M0 27L17 50L0 73Z"/><path fill="#7a3dc4" d="M0 27L9 23L74 73V97L0 40Z"/><path fill="#9657e2" d="M0 73L9 77L74 27V3L0 60Z"/><path fill="#a86df2" d="M73 3L80 0L97 10Q100 12 100 16V84Q100 88 97 90L80 100L73 97Z"/></svg>
<svg class="a" style="left:1700px;top:985px" width="109" height="26" viewBox="1700 985 109 26" fill="none" stroke="#fff" stroke-width="1.4"><path d="M1710.200 1001.700L1717.300 994.600L1724.400 1001.700"/><rect x="1750.400" y="993.400" width="13.600" height="9.600" rx="0.800"/><rect x="1752" y="995.600" width="10.400" height="5.800" fill="#fff" stroke="none"/><path d="M1764.700 996.500V1000" stroke-width="1.200"/><path d="M1746.800 991.200V993.200M1748.800 991.200V993.200M1746.100 993.300H1749.500V996.400Q1747.800 998 1746.100 996.400ZM1747.800 997.500V1003.200" stroke-width="1.200"/><rect x="1787" y="991.300" width="15.600" height="11" /><path d="M1793.800 1002.300V1005.400M1790 1005.600H1797"/><path d="M1784.600 990.800H1788V995.800Q1786.300 997.200 1784.600 995.800ZM1786.300 996.800V1005.800" stroke-width="1.200"/></svg>
</div>
</div>
</body></html>
